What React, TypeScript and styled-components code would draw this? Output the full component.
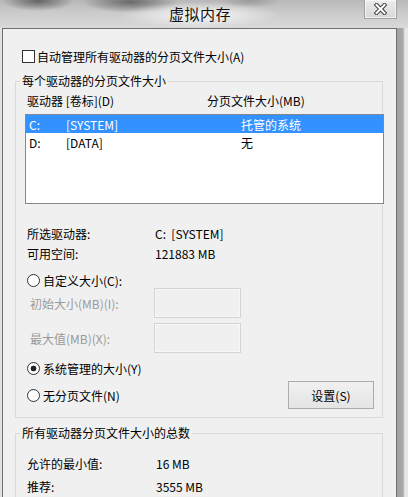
import React from 'react';
import styled, { createGlobalStyle } from 'styled-components';

const GlobalStyle = createGlobalStyle`
  html, body {
    margin: 0;
    padding: 0;
    overflow: hidden;
    background: #d0d0d0;
  }
  body {
    font-family: 'Noto Sans CJK SC', 'Noto Sans', sans-serif;
    font-size: 12px;
    color: #000;
  }
`;

const drives = [
  { letter: 'C:', label: '[SYSTEM]', size: '托管的系统', selected: true },
  { letter: 'D:', label: '[DATA]', size: '无', selected: false },
];

const App = () => {
  return (
    <>
      <GlobalStyle />
      <Window>
        <TitleBar>
          <span />
          <Title>虚拟内存</Title>
          <CloseButton aria-label="关闭">
            <svg width="13" height="12" viewBox="0 0 13 12">
              <path d="M2.5 2 L10.5 10 M10.5 2 L2.5 10" stroke="#3c3c3c" strokeWidth="4" strokeLinecap="square" />
              <path d="M2.5 2 L10.5 10 M10.5 2 L2.5 10" stroke="#fff" strokeWidth="2" strokeLinecap="square" />
            </svg>
          </CloseButton>
        </TitleBar>
        <FrameRow>
          <LeftEdge />
          <Client>
            <CheckRow>
              <CheckBox />
              <span>自动管理所有驱动器的分页文件大小(A)</span>
            </CheckRow>

            <Group>
              <Legend>每个驱动器的分页文件大小</Legend>
              <HeaderRow>
                <span>驱动器 [卷标](D)</span>
                <span>分页文件大小(MB)</span>
              </HeaderRow>
              <ListBox>
                {drives.map((d) => (
                  <ListRow key={d.letter} $selected={d.selected}>
                    <span>{d.letter}</span>
                    <span>{d.label}</span>
                    <span>{d.size}</span>
                  </ListRow>
                ))}
              </ListBox>

              <InfoBlock>
                <InfoRow $col={128}>
                  <span>所选驱动器:</span>
                  <span>C:&nbsp;&nbsp;[SYSTEM]</span>
                </InfoRow>
                <InfoRow $col={128}>
                  <span>可用空间:</span>
                  <span>121883 MB</span>
                </InfoRow>
              </InfoBlock>

              <RadioRow $top={9}>
                <RadioMark />
                <span>自定义大小(C):</span>
              </RadioRow>
              <FieldRow>
                <span>初始大小(MB)(I):</span>
                <TextBox />
              </FieldRow>
              <FieldRow $top={5}>
                <span>最大值(MB)(X):</span>
                <TextBox />
              </FieldRow>

              <RadioRow $top={7}>
                <RadioMark $checked />
                <span>系统管理的大小(Y)</span>
              </RadioRow>
              <ButtonRow>
                <RadioLine>
                  <RadioMark />
                  <span>无分页文件(N)</span>
                </RadioLine>
                <PushButton>设置(S)</PushButton>
              </ButtonRow>
            </Group>

            <Group $top={7} $bottom={12}>
              <Legend>所有驱动器分页文件大小的总数</Legend>
              <TotalsBlock>
                <InfoRow $col={129}>
                  <span>允许的最小值:</span>
                  <span>16 MB</span>
                </InfoRow>
                <InfoRow $col={129}>
                  <span>推荐:</span>
                  <span>3555 MB</span>
                </InfoRow>
              </TotalsBlock>
            </Group>
          </Client>
          <RightEdge />
        </FrameRow>
      </Window>
    </>
  );
};

// Styled Components
const clientColor = '#f0f0f0';
const groupLine = '#d9d9d9';

const Window = styled.div`
  width: 408px;
  height: 497px;
  display: flex;
  flex-direction: column;
  overflow: hidden;
`;

const TitleBar = styled.div`
  height: 28px;
  flex: none;
  display: grid;
  grid-template-columns: 1fr auto 1fr;
  align-items: start;
  padding-right: 8px;
  background:
    radial-gradient(ellipse 80px 13px at 200px 15px, rgba(252, 252, 252, 0.95), rgba(252, 252, 252, 0)),
    radial-gradient(ellipse 36px 10px at 38px 1px, rgba(70, 70, 70, 0.75), rgba(70, 70, 70, 0)),
    radial-gradient(ellipse 48px 11px at 130px 2px, rgba(70, 70, 70, 0.7), rgba(70, 70, 70, 0)),
    radial-gradient(ellipse 30px 7px at 250px 1px, rgba(110, 110, 110, 0.4), rgba(110, 110, 110, 0)),
    linear-gradient(to bottom, #b8b8b8 0, #cbcbcb 45%, #d9d9d9 100%);
`;

const Title = styled.div`
  font-size: 15px;
  line-height: 28px;
  color: #111;
  letter-spacing: 0.5px;
`;

const CloseButton = styled.div`
  justify-self: end;
  margin-right: 3px;
  width: 33px;
  height: 19px;
  box-sizing: border-box;
  border: 1px solid #a3a3a3;
  border-top: none;
  background: linear-gradient(to bottom, #ececec, #d8d8d8);
  box-shadow: inset 0 0 0 1px rgba(255, 255, 255, 0.6);
  display: flex;
  align-items: center;
  justify-content: center;
`;

const FrameRow = styled.div`
  flex: 1;
  display: flex;
  min-height: 0;
`;

const LeftEdge = styled.div`
  width: 2px;
  flex: none;
  background: #e2e2e2;
`;

const RightEdge = styled.div`
  width: 11px;
  flex: none;
  background: linear-gradient(to right, #a2a2a2 0, #a8a8a8 6px, #cfcfcf 7px, #e6e6e6 8px);
`;

const Client = styled.div`
  flex: 1;
  min-width: 0;
  background: ${clientColor};
  border: 1px solid #6f6f6f;
  border-bottom: none;
  overflow: hidden;
`;

const CheckRow = styled.div`
  display: flex;
  align-items: center;
  gap: 2px;
  height: 16px;
  margin-top: 19px;
  padding-left: 19px;
`;

const CheckBox = styled.span`
  width: 13px;
  height: 13px;
  box-sizing: border-box;
  border: 1px solid #333;
  background: #fff;
`;

const Group = styled.fieldset<{ $top?: number; $bottom?: number }>`
  margin: ${(p) => p.$top ?? 9}px 0 0 12px;
  width: 368px;
  box-sizing: border-box;
  min-inline-size: 0;
  padding: 0 0 ${(p) => p.$bottom ?? 8}px 0;
  border: 1px solid ${groupLine};
`;

const Legend = styled.legend`
  margin-left: 4px;
  padding: 0 2px;
  line-height: 16px;
  background: ${clientColor};
`;

const HeaderRow = styled.div`
  display: grid;
  grid-template-columns: 180px auto;
  height: 16px;
  line-height: 16px;
  margin-top: 4px;
  padding-left: 11px;
`;

const ListBox = styled.div`
  margin: 5px 0 0 9px;
  width: 359px;
  height: 90px;
  box-sizing: border-box;
  border: 1px solid #828790;
  background: #fff;
`;

const ListRow = styled.div<{ $selected?: boolean }>`
  display: grid;
  grid-template-columns: 37px 175px 1fr;
  align-items: center;
  height: 18px;
  padding-left: 3px;
  background: ${(p) => (p.$selected ? '#3392ff' : 'transparent')};
  color: ${(p) => (p.$selected ? '#fff' : '#000')};
`;

const InfoBlock = styled.div`
  margin-top: 19px;
`;

const TotalsBlock = styled.div`
  margin-top: 12px;
  display: flex;
  flex-direction: column;
  gap: 3px;
`;

const InfoRow = styled.div<{ $col: number }>`
  display: grid;
  grid-template-columns: ${(p) => p.$col}px 1fr;
  align-items: center;
  height: 20px;
  padding-left: 11px;
`;

const RadioLine = styled.div`
  display: flex;
  align-items: center;
  gap: 3px;
`;

const RadioRow = styled(RadioLine)<{ $top?: number }>`
  height: 16px;
  margin-top: ${(p) => p.$top ?? 0}px;
  padding-left: 11px;
`;

const RadioMark = styled.span<{ $checked?: boolean }>`
  width: 13px;
  height: 13px;
  box-sizing: border-box;
  border: 1px solid #333;
  border-radius: 50%;
  background: ${(p) =>
    p.$checked ? 'radial-gradient(circle, #222 0 2.6px, #fff 3.2px)' : '#fff'};
`;

const FieldRow = styled.div<{ $top?: number }>`
  display: grid;
  grid-template-columns: 124px 87px;
  align-items: center;
  height: 30px;
  margin-top: ${(p) => p.$top ?? 0}px;
  padding-left: 14px;
  color: #9a9a9a;
`;

const TextBox = styled.div`
  height: 30px;
  box-sizing: border-box;
  border: 1px solid #d4d4d4;
  background: ${clientColor};
  box-shadow: inset 0 0 0 1px #f7f7f7;
`;

const ButtonRow = styled.div`
  display: flex;
  align-items: center;
  justify-content: space-between;
  height: 28px;
  margin-top: 5px;
  padding: 0 8px 0 11px;
`;

const PushButton = styled.button`
  width: 86px;
  height: 28px;
  box-sizing: border-box;
  padding: 0;
  border: 1px solid #acacac;
  background: linear-gradient(to bottom, #f1f1f1, #e4e4e4);
  font-family: inherit;
  font-size: 12px;
  color: #000;
  cursor: pointer;
  &:hover {
    background: linear-gradient(to bottom, #eaf6fd, #d9f0fc);
    border-color: #7eb4ea;
  }
`;

export default App;
